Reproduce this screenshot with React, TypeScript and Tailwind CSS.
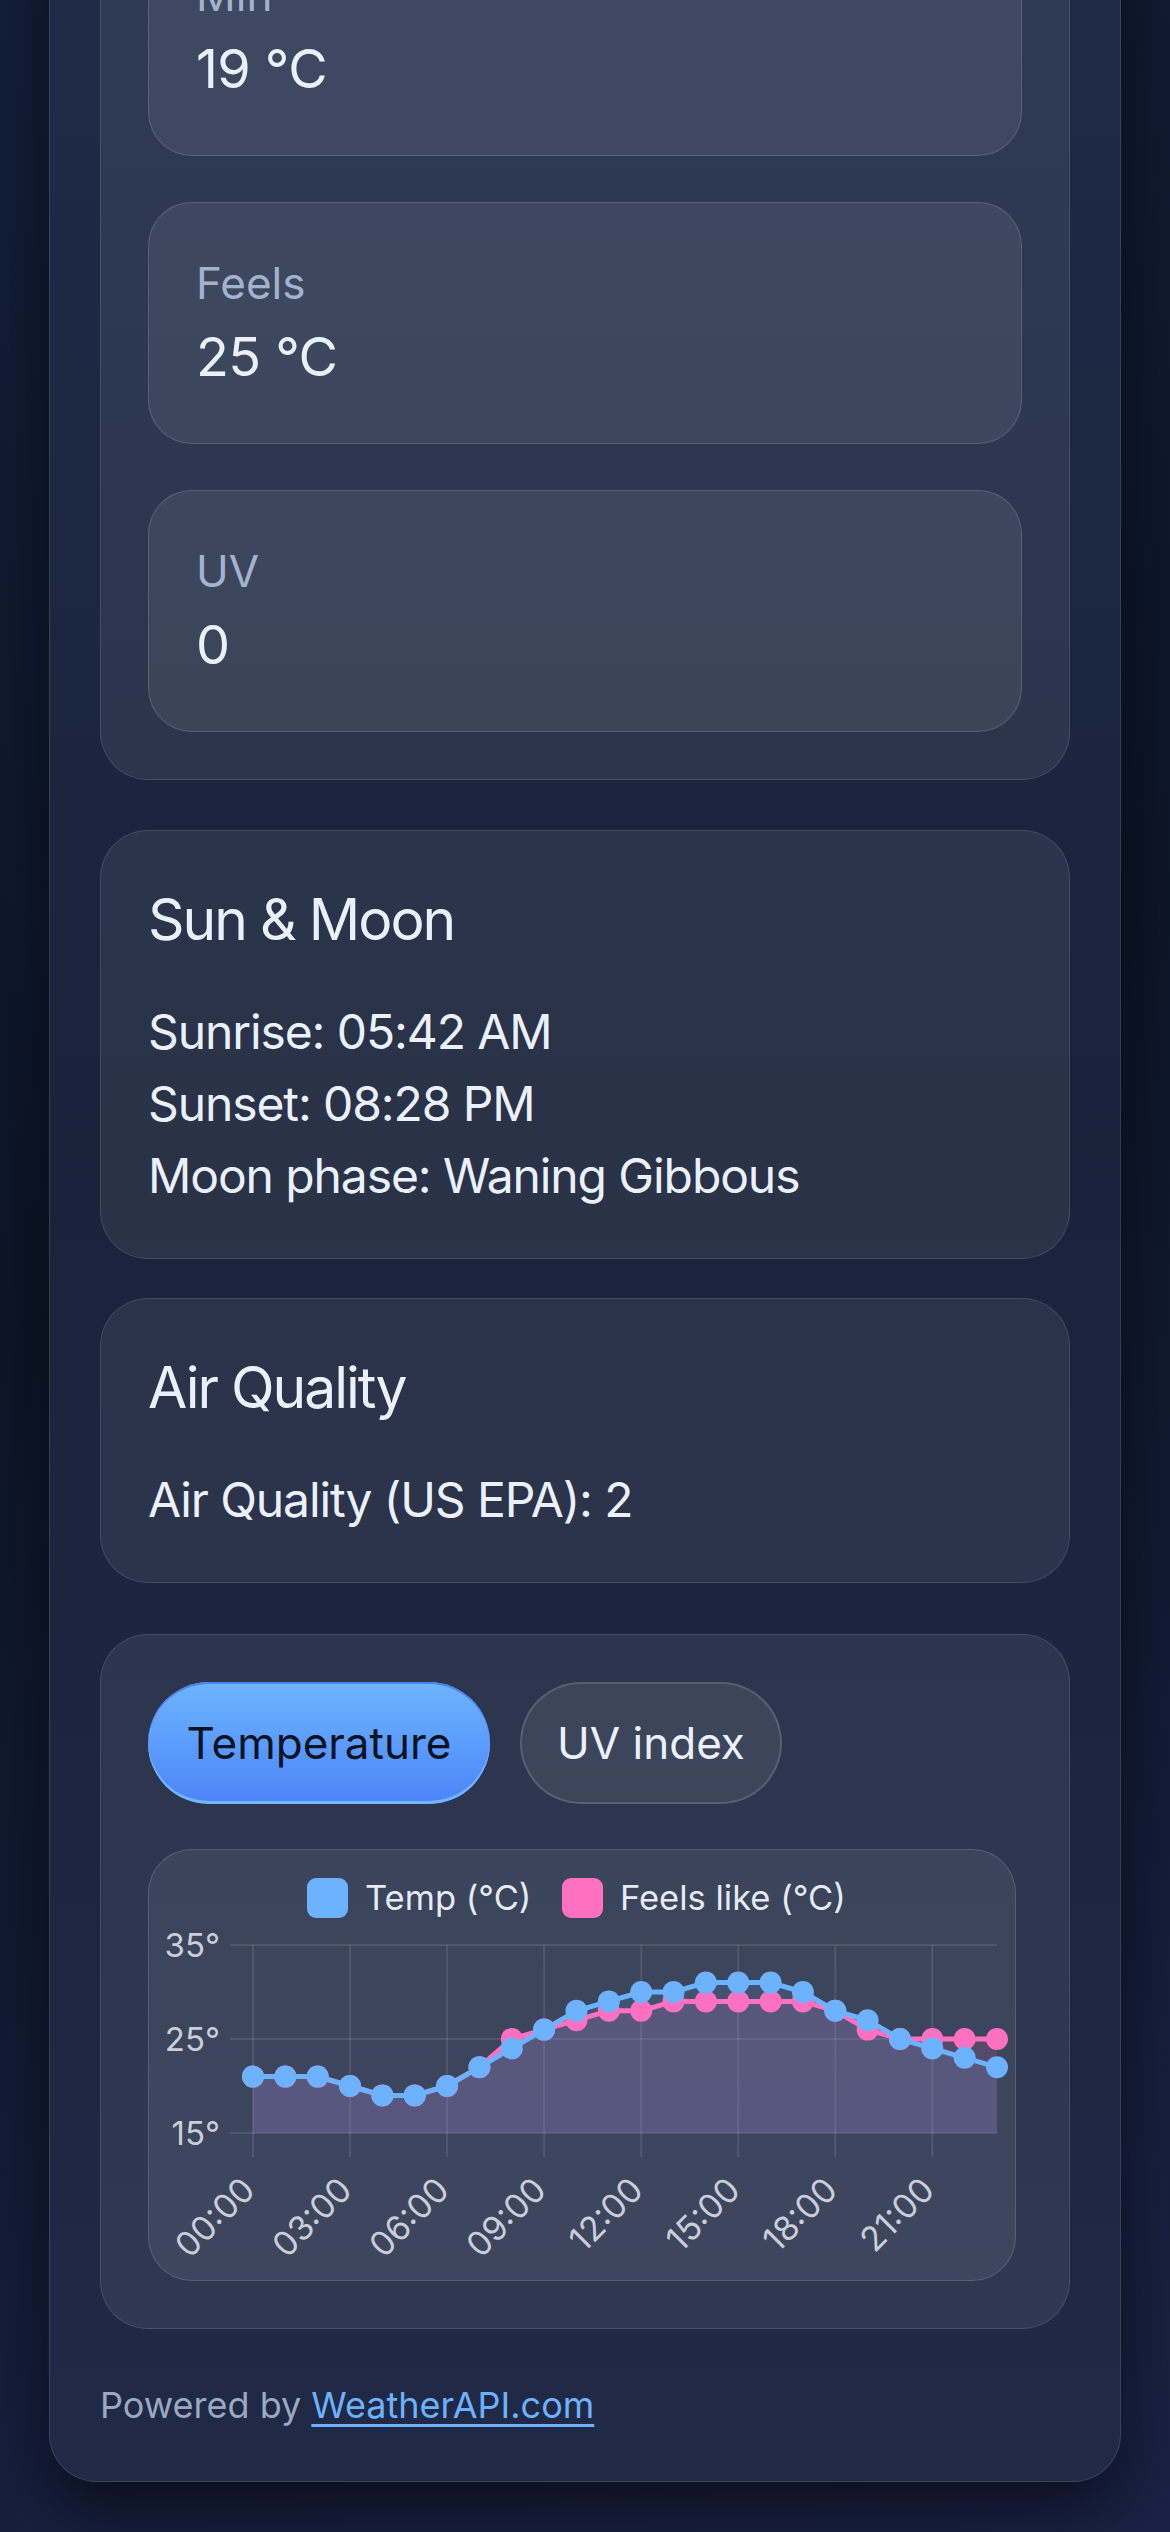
import React from "react";

const temp = [21, 21, 21, 20, 19, 19, 20, 22, 24, 26, 28, 29, 30, 30, 31, 31, 31, 30, 28, 27, 25, 24, 23, 22];
const feels = [21, 21, 21, 20, 19, 19, 20, 22, 25, 26, 27, 28, 28, 29, 29, 29, 29, 29, 28, 26, 25, 25, 25, 25];

function Stat({ label, value }: { label: string; value: string }) {
  return (
    <div className="h-[242px] rounded-[44px] border border-white/[0.14] bg-white/[0.08] px-[47px] pt-[47px]">
      <div className="text-[44px] leading-[66px] text-[#a3b2cf]">{label}</div>
      <div className="text-[54px] leading-[81px] tracking-[-0.6px] text-[#eaf1fd]">{value}</div>
    </div>
  );
}

function Card({ title, children }: { title: string; children: React.ReactNode }) {
  return (
    <div className="rounded-[48px] border border-white/[0.12] bg-white/[0.07] px-[47px] pt-[47px] pb-[46px]">
      <h2 className="mb-[34px] text-[57px] leading-[84px] tracking-[-2px] text-[#eaf1fd]">{title}</h2>
      <div className="text-[48px] leading-[72px] tracking-[-1.1px] text-[#eaf1fd]">{children}</div>
    </div>
  );
}

function Chart() {
  const x0 = 104;
  const step = 32.348;
  const yBase = 283;
  const k = 9.4;
  const px = (i: number) => x0 + i * step;
  const py = (v: number) => yBase - (v - 15) * k;
  const line = (d: number[]) =>
    d.map((v, i) => `${i ? "L" : "M"}${px(i).toFixed(1)} ${py(v).toFixed(1)}`).join(" ");
  const area = (d: number[]) => `${line(d)} L${px(23).toFixed(1)} ${yBase} L${x0} ${yBase} Z`;
  const ticks = [0, 3, 6, 9, 12, 15, 18, 21];

  return (
    <svg width="866" height="430" className="block" fontFamily="Inter, sans-serif">
      {/* legend */}
      <rect x="158" y="28" width="41" height="40" rx="9" fill="#6cb2ff" />
      <text x="216" y="60" fontSize="34.5" fill="#e6ebf3">
        Temp (°C)
      </text>
      <rect x="413" y="28" width="41" height="40" rx="9" fill="#ff70c1" />
      <text x="471" y="60" fontSize="34.5" fill="#e6ebf3">
        Feels like (°C)
      </text>

      {/* grid */}
      {[35, 25, 15].map((v) => (
        <g key={v}>
          <line x1="81" x2="848" y1={py(v)} y2={py(v)} stroke="rgba(255,255,255,0.1)" strokeWidth="2" />
          <text x="71" y={py(v) + 12} fontSize="33" fill="#c9ced8" textAnchor="end">
            {v}°
          </text>
        </g>
      ))}
      {ticks.map((i) => (
        <g key={i}>
          <line x1={px(i)} x2={px(i)} y1="95" y2="307" stroke="rgba(255,255,255,0.1)" strokeWidth="2" />
          <text
            transform={`translate(${(px(i) + 4).toFixed(1)} 342) rotate(-45)`}
            fontSize="34"
            fill="#c9ced8"
            textAnchor="end"
          >
            {String(i).padStart(2, "0")}:00
          </text>
        </g>
      ))}

      {/* fills */}
      <path d={area(feels)} fill="rgba(255,112,193,0.13)" />
      <path d={area(temp)} fill="rgba(108,178,255,0.13)" />

      {/* feels like */}
      <path d={line(feels)} fill="none" stroke="#ff70c1" strokeWidth="5" strokeLinejoin="round" />
      {feels.map((v, i) => (
        <circle key={i} cx={px(i)} cy={py(v)} r="11" fill="#ff70c1" />
      ))}
      {/* temp */}
      <path d={line(temp)} fill="none" stroke="#6cb2ff" strokeWidth="5" strokeLinejoin="round" />
      {temp.map((v, i) => (
        <circle key={i} cx={px(i)} cy={py(v)} r="11" fill="#6cb2ff" />
      ))}
    </svg>
  );
}

export default function App() {
  return (
    <div className="h-[2532px] overflow-hidden bg-[linear-gradient(160deg,#12203a_0%,#0d1628_45%,#1a2346_100%)] font-['Inter',sans-serif]">
      <div className="mx-[49px] mt-[-185px] rounded-[48px] border border-white/[0.12] bg-[linear-gradient(180deg,#1f2c49_0%,#19233a_50%,#202946_100%)] px-[50px] pt-[50px] pb-[49px] shadow-[0_30px_70px_rgba(0,0,0,0.55)]">
        {/* stats */}
        <div className="flex flex-col gap-[46px] rounded-[48px] border border-white/[0.12] bg-white/[0.075] p-[47px]">
          <Stat label="Min" value="19 °C" />
          <Stat label="Feels" value="25 °C" />
          <Stat label="UV" value="0" />
        </div>

        <div className="mt-[50px]">
          <Card title="Sun & Moon">
            <p>Sunrise: 05:42 AM</p>
            <p>Sunset: 08:28 PM</p>
            <p>Moon phase: Waning Gibbous</p>
          </Card>
        </div>

        <div className="mt-[39px]">
          <Card title="Air Quality">
            <p>Air Quality (US EPA): 2</p>
          </Card>
        </div>

        {/* chart */}
        <div className="mt-[51px] rounded-[48px] border border-white/[0.12] bg-white/[0.075] pl-[47px] pt-[47px] pb-[47px]">
          <div className="flex gap-[30px]">
            <button className="flex h-[122px] w-[342px] items-center justify-center rounded-full bg-gradient-to-b from-[#6eb4ff] to-[#4c84f7] text-[44px] text-[#0a1324] shadow-[inset_0_-3px_0_#72b6ff,inset_0_2px_0_#4a83f5]">
              Temperature
            </button>
            <button className="flex h-[122px] w-[262px] items-center justify-center rounded-full border-2 border-white/[0.14] bg-white/[0.08] text-[44px] text-[#eaf1fd]">
              UV index
            </button>
          </div>
          <div className="mt-[45px] h-[432px] w-[868px] overflow-hidden rounded-[44px] border border-white/[0.14] bg-white/[0.07]">
            <Chart />
          </div>
        </div>

        <p className="mt-[49px] text-[36px] leading-[54px] text-[#9aa8c2]">
          Powered by{" "}
          <a href="#" className="text-[#6cb2ff] underline decoration-[3px] underline-offset-[6px]">
            WeatherAPI.com
          </a>
        </p>
      </div>
    </div>
  );
}
